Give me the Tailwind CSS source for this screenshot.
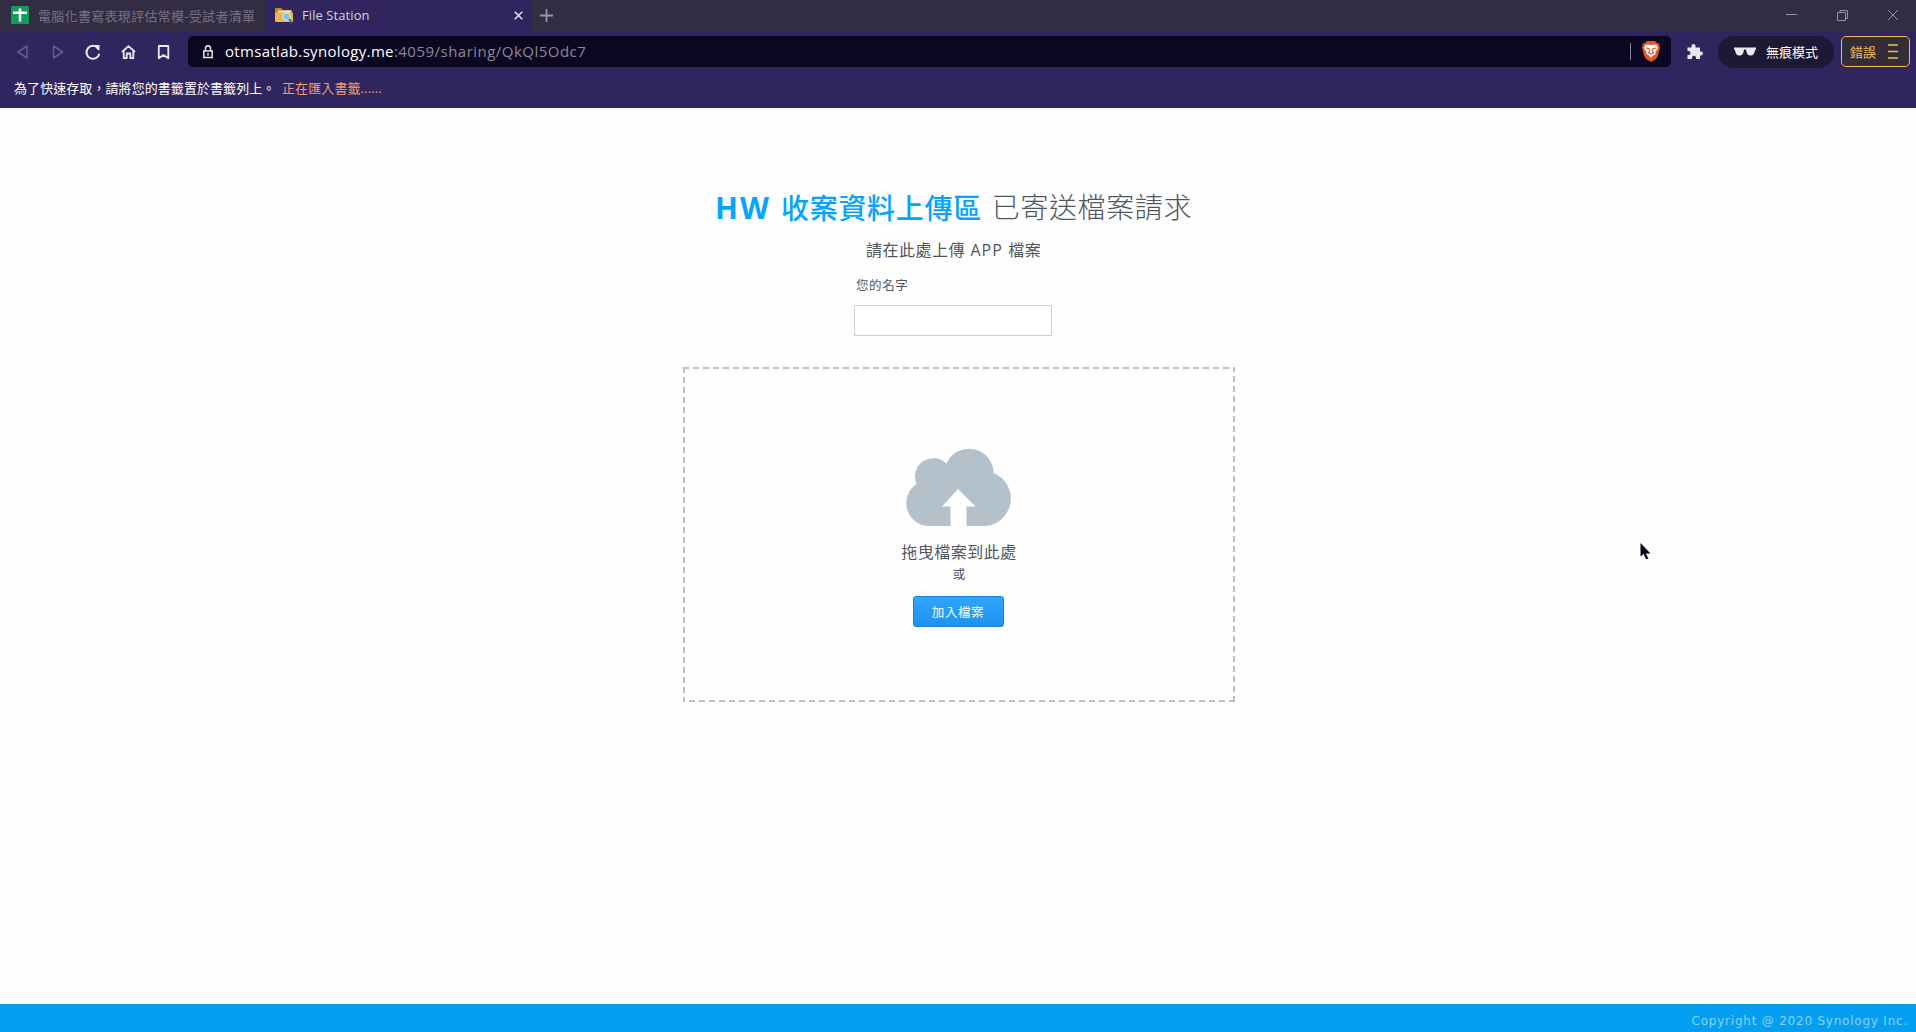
<!DOCTYPE html>
<html lang="zh-Hant">
<head>
<meta charset="utf-8">
<title>File Station</title>
<script src="https://cdn.jsdelivr.net/npm/@tailwindcss/browser@4"></script>
</head>
<body class="flex h-screen w-screen flex-col overflow-hidden bg-[#fefefe] font-['Open_Sans','Noto_Sans_CJK_TC',sans-serif] whitespace-nowrap">
<header class="flex h-[108px] shrink-0 flex-col bg-[#30255e] text-white">
  <!-- Tab strip -->
  <div class="flex h-8 bg-[#322d42]">
    <div class="flex w-[266px] items-center pl-[11px] pb-[2px]">
      <svg class="size-[18px] shrink-0" viewBox="0 0 18 18"><rect width="18" height="18" rx="1.5" fill="#129a59"/><path d="M2 6.800h14M9 2.500v13" stroke="#fff" stroke-width="2.600"/></svg>
      <span class="ml-[9px] w-[217px] overflow-hidden pt-[2px] text-[13px] leading-[30px] tracking-[0.300px] text-[#767284]">電腦化書寫表現評估常模-受試者清單</span>
    </div>
    <div class="flex w-[265px] items-center bg-[#30255e] pb-px pl-[9px]">
      <svg class="size-[18px] shrink-0" viewBox="0 0 18 18"><path d="M0 2q0-1 1-1h5l2 2h9v4H0z" fill="#bd872c"/><path d="M3 3.500h13v4H3z" fill="#f7e6b5"/><path d="M0 5.500h18V14q0 1-1 1H1q-1 0-1-1z" fill="#e9b64f"/><circle cx="11.5" cy="9.500" r="3.600" fill="#6ac5fa" stroke="#d8eefa" stroke-width="1"/><path d="m14 12 3 4" stroke="#446a92" stroke-width="1.800"/></svg>
      <span class="ml-[9px] w-[212px] text-[13px] leading-[31px] tracking-[0.080px] text-[#d6d3df]">File Station</span>
      <svg class="size-[9px]" viewBox="0 0 9 9"><path d="m.7.7 7.600 7.600m0-7.600L.7 8.300" stroke="#e0dde8" stroke-width="1.600"/></svg>
    </div>
    <div class="flex grow items-center pb-px pl-[9px]">
      <svg class="size-[13px]" viewBox="0 0 13 13"><path d="M6.500 0v13M0 6.500h13" stroke="#98959f" stroke-width="1.800"/></svg>
    </div>
    <div class="flex items-center pb-[2px] pr-[17px]">
      <svg class="h-3 w-[113px]" viewBox="0 0 113 12" fill="none" stroke="#97949c"><path d="M0 5.500h11M51.500 3.500h8v8h-8zM54 3.500v-2h7.500v8H60M102 1l10 10m0-10-10 10"/></svg>
    </div>
  </div>
  <!-- Toolbar -->
  <div class="flex h-[39px] items-center pl-4 pr-[7px]">
    <svg class="h-5 w-[156px] shrink-0" viewBox="0 0 156 20" fill="none" stroke="#ecebf1" stroke-width="1.800" stroke-linejoin="round">
      <path d="M11 4v12L2 10zM37.500 4v12l9-6z" stroke="#625c8b" stroke-width="1.600"/>
      <path d="M82 6.200a6.500 6.500 0 1 0 1.300 5.600" stroke-width="2"/><path d="M78.500 3h5v5.500q-2.500-.5-3.300-2.500z" fill="#ecebf1" stroke="none"/>
      <path d="m106 10 6.500-5.800L119 10M107.700 9v7.200h3v-4.700h3.600v4.700h3V9"/>
      <path d="M142.800 4h9.500v12.300L147.500 13l-4.700 3.300z"/>
    </svg>
    <div class="ml-4 flex h-[31px] w-[1483px] shrink-0 items-center rounded-[5px] bg-[#0b0621] pl-[15px]">
      <svg class="h-[14px] w-[10px]" viewBox="0 0 10 14" fill="none" stroke="#e8e7ee" stroke-width="1.500"><path d="M2.500 6V3.300a2.500 2.500 0 0 1 5 0V6M.8 6h8.400v6.500H.8z"/><path d="M5 8v2.500"/></svg>
      <span class="ml-3 grow pb-px text-[15px] leading-[30px] tracking-[0.480px] text-[#8b8898]"><span class="tracking-[0.330px] text-white">otmsatlab.synology.me</span>:4059/sharing/QkQl5Odc7</span>
      <span class="mr-[11px] h-[17px] w-[1.500px] bg-[#888593]"></span>
      <svg class="mr-[11px] h-[21px] w-[18px]" viewBox="0 0 18 21"><path d="M5 0h8l2 2 2 .5 1 4-2 8-2 3.500-5 3-5-3L2 14.500l-2-8 1-4L3 2z" fill="#e65325"/><path d="M3.500 4 6 3.500l3 .5 3-.5 2.500.5 1.500 3-2.500 4 .3 2-2.800 1.500L9 17l-2-2.500L4.200 13l.3-2L2 7z" fill="#fff"/><path d="m4 7 3.500.8M14 7l-3.500.8M7.500 8v2l-1 1.700L9 13l2.500-1.300-1-1.700V8" fill="none" stroke="#e65325" stroke-width="1.200"/></svg>
    </div>
    <svg class="ml-[15px] size-[17px] shrink-0" viewBox="0 0 17 17"><path d="M1.500 4.500h4V3a2 2 0 0 1 4 0v1.500H14V8.500h1a2 2 0 0 1 0 4h-1V16h-4v-1.300a2 2 0 0 0-4 0V16H1.500v-4h1a2 2 0 0 0 0-4h-1z" fill="#e9e8ef"/></svg>
    <div class="ml-[15px] flex h-8 w-[116px] shrink-0 items-center rounded-full bg-[#1e1835] pl-4">
      <svg class="h-[9px] w-[22px]" viewBox="0 0 22 9"><path d="M0 .5h22v2l-1 .5q-.5 5.500-4.500 5.500T12 2.500h-2Q9.500 8.500 5.500 8.500T1 3L0 2.500z" fill="#e9e8ef"/></svg>
      <span class="ml-[10px] text-[13px] leading-8">無痕模式</span>
    </div>
    <div class="ml-[7px] flex h-[31px] w-[69px] shrink-0 items-center rounded-[5px] border border-[#f2b955] bg-[#342d37] pl-[8px] text-[#f2b955]">
      <span class="pt-px text-[13px] leading-[28px]">錯誤</span>
      <svg class="ml-3 h-[15px] w-[11px]" viewBox="0 0 11 15"><path d="M0 1h10M0 7.500h10M0 14h10" stroke="#f2b955" stroke-width="1.400"/></svg>
    </div>
  </div>
  <!-- Bookmarks bar -->
  <div class="flex h-[35px] items-center pl-[14px] text-[13px] leading-[35px]">
    <span class="w-[268px] tracking-[0.070px]">為了快速存取，請將您的書籤置於書籤列上。</span>
    <span class="tracking-[0.100px] text-[#f79a71]">正在匯入書籤......</span>
  </div>
</header>

<main class="flex grow flex-col items-center font-['DejaVu_Sans','Noto_Sans_CJK_TC',sans-serif] text-[#50565e]">
  <h1 class="mt-[80px] flex h-10 w-[476px] items-center text-[28px] leading-10 tracking-[0.600px] -translate-x-[4px]">
    <span class="flex w-[276px] items-center font-['Open_Sans','Noto_Sans_CJK_TC',sans-serif] text-[#05a5fe]"><span class="-ml-px w-[66px] text-[30px] font-bold tracking-[2px]">HW</span><span class="font-medium tracking-[0.700px]">收案資料上傳區</span></span>
    <span class="pt-[2px] font-light leading-[38px]">已寄送檔案請求</span>
  </h1>
  <p class="mt-[10px] h-6 w-[178px] text-base leading-6 tracking-[0.500px] -translate-x-[3px]">請在此處上傳 <span class="font-['Open_Sans',sans-serif] tracking-[0.900px]">APP</span> 檔案</p>
  <label class="mt-[14px] flex w-[198px] flex-col text-[12.500px] -translate-x-[5px]">
    <span class="h-5 pl-[2px] leading-5 tracking-[0.600px]">您的名字</span>
    <input type="text" class="mt-[9px] h-[31px] w-[198px] border border-[#c6d0d9] bg-white">
  </label>
  <section class="relative mt-[31px] flex h-[335px] w-[552px] flex-col items-center translate-x-px">
    <svg class="absolute inset-0 size-full" viewBox="0 0 552 335" fill="none" stroke="#b5c1cb" stroke-width="2"><path d="M0 1h552M1 0v335M551 335V0M552 334H0" stroke-dasharray="6 4"/></svg>
    <svg class="mt-[81px] h-[78px] w-[107px] -translate-x-px" viewBox="0 0 107 78"><path d="M22.500 77.500A23 23 0 0 1 11.500 35.500 18.500 18.500 0 0 1 41.500 15 24.500 24.500 0 0 1 88.500 24.500 27.500 27.500 0 0 1 80 77.500H61.500V58h9L53 40.500 37 58h8.500v19.500z" fill="#b4c0ca" class="translate-y-[0.500px]"/></svg>
    <p class="mt-[15px] h-6 text-base leading-6 tracking-[0.500px]">拖曳檔案到此處</p>
    <p class="mt-px h-[18px] text-[12.500px] leading-[18px]">或</p>
    <button class="mt-[12px] h-[31px] w-[91px] rounded-[3px] border border-[#1a85dc] bg-linear-to-b from-[#30a5fd] to-[#1c92ef] pt-[2px] text-[12.500px] leading-[27px] tracking-[0.600px] text-white -translate-x-px">加入檔案</button>
  </section>
  <svg class="absolute left-[1640px] top-[543px] h-[17px] w-[12px]" viewBox="0 0 12 17"><path d="M.5 0v13.500l3-2.500 2.500 5h2.500L6 10.500h4.500z" fill="#080713"/></svg>
</main>
<footer class="flex h-7 shrink-0 items-center justify-end bg-[#049ff2] pr-[8px] pt-[5px] font-['DejaVu_Sans',sans-serif] text-[12px] leading-[18px] tracking-[0.780px] text-[#8dd0f7]">Copyright @ 2020 Synology Inc.</footer>
</body>
</html>
